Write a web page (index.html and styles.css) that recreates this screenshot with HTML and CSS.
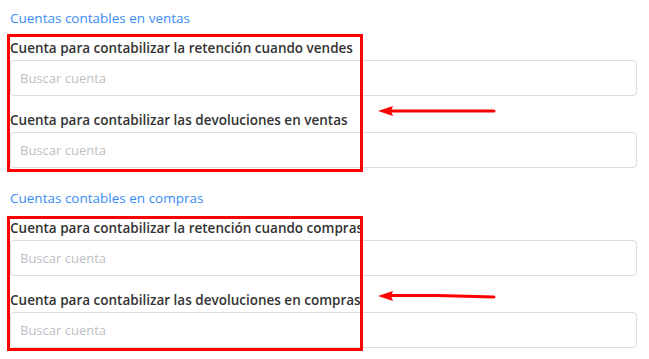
FILE: index.html
```html
<html lang="es">
<head>
    <meta charset="UTF-8">
    <meta name="viewport" content="width=device-width, initial-scale=1.0">
    <title>Cuentas contables</title>

    <link rel="stylesheet" href="styles.css">

</head>
<body>
    <div class="page">
        <section class="account-section">
            <h3 class="section-title">Cuentas contables en ventas</h3>
            <div class="field-group">
                <div class="form-field">
                    <label class="field-label">Cuenta para contabilizar la retención cuando vendes</label>
                    <input class="field-input" type="text" placeholder="Buscar cuenta">
                </div>
                <div class="form-field">
                    <label class="field-label">Cuenta para contabilizar las devoluciones en ventas</label>
                    <input class="field-input" type="text" placeholder="Buscar cuenta">
                </div>
                <div class="mark-box mark-box-sales"></div>
                <svg class="mark-arrow mark-arrow-sales" width="120" height="14" viewBox="0 0 120 14">
                    <line x1="12" y1="7" x2="117" y2="7" stroke="#ff0000" stroke-width="3" stroke-linecap="round"/>
                    <polygon points="1,7 16,2 14,7 16,12" fill="#ff0000"/>
                </svg>
            </div>
        </section>

        <section class="account-section">
            <h3 class="section-title">Cuentas contables en compras</h3>
            <div class="field-group">
                <div class="form-field">
                    <label class="field-label">Cuenta para contabilizar la retención cuando compras</label>
                    <input class="field-input" type="text" placeholder="Buscar cuenta">
                </div>
                <div class="form-field">
                    <label class="field-label">Cuenta para contabilizar las devoluciones en compras</label>
                    <input class="field-input" type="text" placeholder="Buscar cuenta">
                </div>
                <div class="mark-box mark-box-purchases"></div>
                <svg class="mark-arrow mark-arrow-purchases" width="120" height="14" viewBox="0 0 120 14">
                    <path d="M12 6.5 L60 6.6 L117 8" fill="none" stroke="#ff0000" stroke-width="3" stroke-linecap="round"/>
                    <polygon points="1,7 16,2 14,7 16,12" fill="#ff0000"/>
                </svg>
            </div>
        </section>
    </div>
</body>
</html>
```

FILE: styles.css
```css
body {
    margin: 0px;
    font-family: "Open Sans", "Liberation Sans", sans-serif;
    background-color: white;
}

.page {
    padding: 0px 12px 0px 10px;
}

.account-section {
    padding-top: 8px;
}

.section-title {
    margin: 0px 0px 8px 0px;
    font-size: 13.5px;
    line-height: 20px;
    font-weight: 400;
    color: #3a8cf5;
}

.field-group {
    position: relative;
    margin-bottom: 12px;
}

.form-field {
    display: flex;
    flex-direction: column;
    margin-bottom: 12px;
}
.form-field:last-of-type {
    margin-bottom: 0px;
}

.field-label {
    font-size: 13.5px;
    line-height: 20px;
    font-weight: 600;
    color: #333333;
    margin: 2px 0px 2px 0px;
    white-space: nowrap;
}

.field-input {
    height: 36px;
    box-sizing: border-box;
    border: 1px solid #dcdcdc;
    border-radius: 4px;
    padding: 0px 9px;
    font-family: "Open Sans", "Liberation Sans", sans-serif;
    font-size: 13px;
    color: #333333;
    background-color: white;
}
.field-input::placeholder {
    color: #bdbfc6;
}

/* red annotations drawn over the form */
.mark-box {
    position: absolute;
    left: -3px;
    width: 356px;
    box-sizing: border-box;
    border: 3px solid #ff0000;
    pointer-events: none;
}
.mark-box-sales {
    top: -2px;
    bottom: -4px;
}
.mark-box-purchases {
    top: 0px;
    bottom: -3px;
}

.mark-arrow {
    position: absolute;
    left: 367px;
}
.mark-arrow-sales {
    top: 68px;
}
.mark-arrow-purchases {
    top: 73px;
}
```
